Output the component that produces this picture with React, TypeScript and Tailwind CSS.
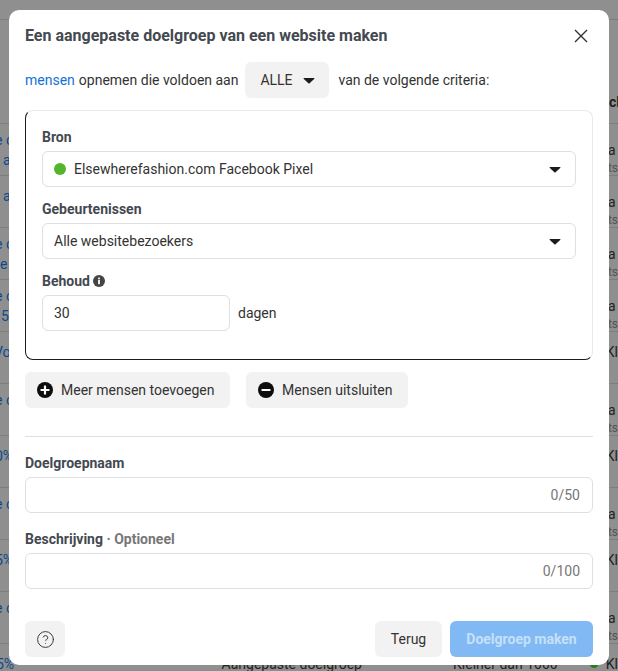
import { CircleHelp } from "lucide-react";

const rows = [
  { left: [{ t: "e c", c: "-ml-[5px]" }, { t: "a", c: "ml-[3px]" }], right: "a" },
  { left: [{ t: "a", c: "ml-[3px]" }], right: "a", single: true },
  { left: [{ t: "e c", c: "-ml-[5px]" }, { t: "e", c: "ml-0" }], right: "a" },
  { left: [{ t: "e c", c: "-ml-[5px]" }, { t: "5", c: "ml-px" }], right: "a" },
  { left: [{ t: "Vo", c: "-ml-[6px]" }], right: "Kl", single: true },
  { left: [{ t: "e c", c: "-ml-[5px]" }], right: "a" },
  { left: [{ t: "0%", c: "-ml-[5px]" }], right: "Kl", single: true },
  { left: [{ t: "e c", c: "-ml-[5px]" }], right: "a" },
  { left: [{ t: "5%", c: "-ml-[5px]" }], right: "Kl", single: true },
  { left: [{ t: "e c", c: "-ml-[5px]" }], right: "a" },
];

function Caret({ className = "" }: { className?: string }) {
  return (
    <svg width="12" height="7" viewBox="0 0 12 7" className={className}>
      <path d="M1 1h10c.4 0 .6.4.4.7L6.6 6.3c-.3.3-.9.3-1.200 0L.6 1.700C.4 1.400.6 1 1 1z" fill="#1c1c1c" />
    </svg>
  );
}

function CircleSign({ plus }: { plus?: boolean }) {
  return (
    <svg width="16" height="16" viewBox="0 0 16 16" className="shrink-0">
      <circle cx="8" cy="8" r="8" fill="#0d0d0d" />
      <rect x="3.500" y="6.900" width="9" height="2.200" rx="0.500" fill="#fff" />
      {plus && <rect x="6.900" y="3.500" width="2.200" height="9" rx="0.500" fill="#fff" />}
    </svg>
  );
}

function Label({ children }: { children: React.ReactNode }) {
  return <div className="h-5 text-sm leading-5 font-bold text-[#444950]">{children}</div>;
}

function Select({ children }: { children: React.ReactNode }) {
  return (
    <div className="mt-1 flex h-9 items-center justify-between rounded-md border border-[#dddfe2] pl-[11px] pr-[14px] text-sm text-[#333]">
      <div className="flex items-center">{children}</div>
      <Caret />
    </div>
  );
}

function CountInput({ count }: { count: string }) {
  return (
    <div className="mt-1 flex h-9 items-center justify-end rounded-md border border-[#dddfe2] pr-3 text-sm text-[#777]">
      {count}
    </div>
  );
}

export default function App() {
  return (
    <div className="relative h-[671px] w-[618px] overflow-hidden bg-[#8f8f8f] font-['Roboto',sans-serif]">
      {/* table behind the dialog */}
      <div className="mt-[19px] h-[105px] border-t border-b border-[#7d7d7d] pt-[72px] pl-[609px] text-sm leading-5 font-bold text-[#222]">
        cl
      </div>
      {rows.map((r, i) => (
        <div key={i} className="flex h-[52px] border-b border-[#7d7d7d]">
          <div className={"w-[594px] text-sm leading-5 text-[#0b4a8c] " + (r.single ? "pt-[10px]" : "pt-[6px]")}>
            {r.left.map((l, j) => (
              <div key={j} className={"h-5 " + l.c}>{l.t}</div>
            ))}
          </div>
          {r.right === "a" ? (
            <div className="pl-4 pt-4 text-sm leading-5 text-[#222]">
              a<div className="text-xs leading-4 text-[#555]">ts</div>
            </div>
          ) : (
            <div className="pl-[13px] pt-[10px] text-sm leading-5 whitespace-nowrap text-[#222]">Kl</div>
          )}
        </div>
      ))}
      <div className="flex h-[52px] pt-[10px] text-sm leading-5 text-[#222]">
        <div className="-ml-1 w-[226px] text-[#0b4a8c]">5%</div>
        <div className="w-[232px]">Aangepaste doelgroep</div>
        <div className="w-[137px]">Kleiner dan 1000</div>
        <div className="flex items-center gap-2 self-start">
          <span className="h-2 w-2 rounded-full bg-[#2c7a1e]" />
          Kl
        </div>
      </div>

      {/* dialog */}
      <div className="absolute top-[10px] left-[9px] h-[655px] w-[600px] rounded-[10px] bg-white px-4">
        <div className="flex h-[52px] items-center justify-between">
          <h1 className="text-base font-bold text-[#444950]">Een aangepaste doelgroep van een website maken</h1>
          <svg width="14" height="14" viewBox="0 0 14 14" className="mr-[5px]">
            <path d="M1 1l12 12M13 1L1 13" stroke="#333" strokeWidth="1.400" fill="none" />
          </svg>
        </div>

        <div className="flex h-9 items-center text-sm text-[#333]">
          <span className="text-[#1472d6]">mensen</span>
          <span className="ml-1">opnemen die voldoen aan</span>
          <div className="mr-[9px] ml-[7px] flex h-9 w-[84px] items-center justify-center gap-[10px] rounded-md bg-[#f2f2f2]">
            ALLE
            <Caret />
          </div>
          <span>van de volgende criteria:</span>
        </div>

        <div className="mt-3 h-[250px] rounded-lg border border-t-[#e9e9e9] border-r-[#e9e9e9] border-b-[#1c1c1c] border-l-[#1c1c1c] px-4 pt-4">
          <Label>Bron</Label>
          <Select>
            <span className="mr-2 h-3 w-3 rounded-full bg-[#52b52c]" />
            Elsewherefashion.com Facebook Pixel
          </Select>
          <div className="mt-3">
            <Label>Gebeurtenissen</Label>
          </div>
          <Select>Alle websitebezoekers</Select>
          <div className="mt-3">
            <Label>
              <span className="flex items-center gap-[3px]">
                Behoud
                <svg width="12" height="12" viewBox="0 0 12 12">
                  <circle cx="6" cy="6" r="6" fill="#444" />
                  <rect x="5.100" y="5" width="1.800" height="4.200" fill="#fff" />
                  <rect x="5.100" y="2.600" width="1.800" height="1.700" fill="#fff" />
                </svg>
              </span>
            </Label>
          </div>
          <div className="mt-1 flex items-center text-sm text-[#333]">
            <div className="flex h-9 w-[188px] items-center rounded-md border border-[#dddfe2] pl-[11px]">30</div>
            <span className="ml-2">dagen</span>
          </div>
        </div>

        <div className="mt-3 flex gap-4 text-sm text-[#333]">
          <div className="flex h-9 w-[205px] items-center gap-2 rounded-md bg-[#f2f2f2] pl-3">
            <CircleSign plus />
            Meer mensen toevoegen
          </div>
          <div className="flex h-9 w-[162px] items-center gap-2 rounded-md bg-[#f2f2f2] pl-3">
            <CircleSign />
            Mensen uitsluiten
          </div>
        </div>

        <div className="mt-7 border-t border-[#dddfe2]" />

        <div className="mt-4">
          <Label>Doelgroepnaam</Label>
          <CountInput count="0/50" />
        </div>
        <div className="mt-4">
          <Label>
            Beschrijving <span className="text-[#777]">· Optioneel</span>
          </Label>
          <CountInput count="0/100" />
        </div>

        <div className="mt-8 flex items-center text-sm">
          <div className="flex h-9 w-10 items-center justify-center rounded-md bg-[#f2f2f2] text-[#333]">
            <CircleHelp size={19} strokeWidth={1.200} />
          </div>
          <div className="ml-auto flex h-9 w-[67px] items-center justify-center rounded-md bg-[#f2f2f2] text-[#333]">
            Terug
          </div>
          <div className="ml-2 flex h-9 w-[143px] items-center justify-center rounded-md bg-[#80b9f3] font-bold text-[#c6e0fa]">
            Doelgroep maken
          </div>
        </div>
      </div>
    </div>
  );
}
